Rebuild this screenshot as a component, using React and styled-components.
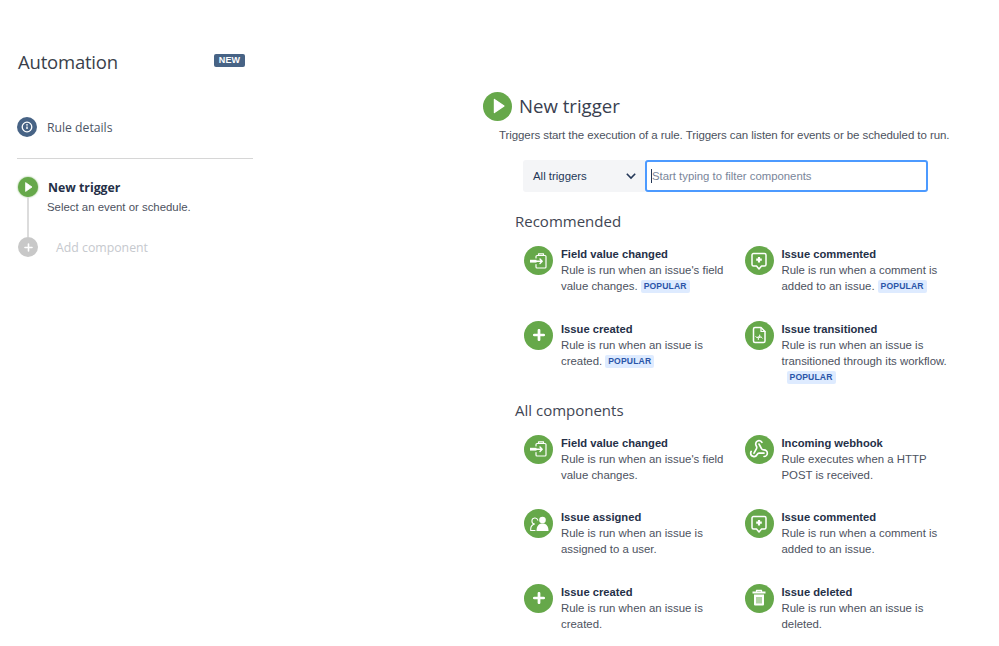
import React from "react";
import styled, { createGlobalStyle } from "styled-components";
import { Webhook } from "lucide-react";

const Global = createGlobalStyle`
  html, body { margin: 0; padding: 0; background: #fff; }
  body { font-family: "Liberation Sans", Arial, sans-serif; color: #4c5260; overflow: hidden; }
`;

const Page = styled.div`
  width: 999px; height: 646px; overflow: hidden; display: flex; align-items: flex-start;
`;
const Sidebar = styled.aside`
  width: 236px; margin-left: 17px; padding-top: 50px; flex: none;
`;
const SideHead = styled.div`
  display: flex; justify-content: space-between; align-items: flex-start; padding: 0 8px 0 1px; height: 66px;
`;
const AppTitle = styled.h1`
  margin: 0; font: 400 18.5px/24px "Open Sans", sans-serif; color: #3a3f4a; letter-spacing: -0.2px;
`;
const NewBadge = styled.span`
  margin-top: 4px; height: 13px; width: 31px; border-radius: 2px; background: #476385; color: #fff;
  font: 700 9px/13px "Liberation Sans", sans-serif; text-align: center; letter-spacing: .2px;
`;
const DetailRow = styled.div`
  display: flex; align-items: center; gap: 10px; height: 22px; padding-bottom: 20px; border-bottom: 1px solid #d6d6d6;
`;
const DetailDot = styled.span`
  width: 20px; height: 20px; border-radius: 50%; background: #476385; display: flex; align-items: center; justify-content: center;
`;
const DetailText = styled.span`
  font: 400 12.2px/16px "Open Sans", sans-serif; color: #4d5566; padding-top: 1px;
`;
const Steps = styled.div`
  display: grid; grid-template-columns: 22px 1fr; column-gap: 9px; padding-top: 18px;
`;
const StepRail = styled.div`
  display: flex; flex-direction: column; align-items: center; grid-row: span 2;
`;
const StepDot = styled.span`
  width: 20px; height: 20px; border-radius: 50%; background: #66a84a; box-shadow: 0 0 2px #66a84a;
  display: flex; align-items: center; justify-content: center; flex: none;
`;
const RailLine = styled.span`
  width: 2px; height: 40px; background: #dcdcdc; flex: none;
`;
const AddDot = styled.span`
  width: 20px; height: 20px; border-radius: 50%; background: #c8c8c8; display: flex; align-items: center; justify-content: center; flex: none;
`;
const StepBody = styled.div`
  padding-top: 3px; margin-left: -1px;
`;
const StepTitle = styled.div`
  font: 700 12.3px/16px "Open Sans", sans-serif; color: #253048; margin-left: 1px;
`;
const StepDesc = styled.div`
  font: 400 11.4px/16px "Liberation Sans", sans-serif; color: #4c5260; margin-top: 3px;
`;
const AddLabel = styled.div`
  margin: 25px 0 0 9px; font: 400 12.3px/16px "Open Sans", sans-serif; color: #c6c9ce;
`;

const Main = styled.main`
  margin-left: 230px; padding-top: 91px; width: 490px; flex: none;
`;
const TriggerHead = styled.div`
  display: flex; align-items: center; gap: 7px; height: 30px;
`;
const BigDot = styled.span`
  width: 29px; height: 29px; border-radius: 50%; background: #66a84a; display: flex; align-items: center; justify-content: center;
`;
const MainTitle = styled.h2`
  margin: 0; font: 400 18.6px/24px "Open Sans", sans-serif; color: #39404f;
`;
const Lead = styled.p`
  margin: 6px 0 0 16px; font: 400 11.5px/16px "Liberation Sans", sans-serif; letter-spacing: -0.08px; color: #4c5260; white-space: nowrap;
`;
const Filters = styled.div`
  display: flex; margin: 17px 0 0 40px; height: 32px;
`;
const SelectBox = styled.div`
  width: 122px; display: flex; align-items: center; justify-content: space-between; padding: 0 8px 0 10px;
  background: #f4f5f7; border-radius: 3px 0 0 3px; font-size: 11.4px; color: #253858; box-sizing: border-box;
`;
const FilterInput = styled.div`
  width: 283px; box-sizing: border-box; border: 2px solid #4c9aff; border-radius: 3px; display: flex; align-items: center;
  padding-left: 4px; font-size: 11.35px; color: #7a869a;
`;
const Caret = styled.span`
  width: 1px; height: 14px; background: #253858;
`;
const SectionTitle = styled.h3`
  margin: ${p => p.$top}px 0 0 32px; font: 400 15px/20px "Open Sans", sans-serif; color: #3f4653;
`;
const Grid = styled.div`
  display: grid; grid-template-columns: 220.5px 220.5px; grid-auto-rows: 74.5px; margin: 15px 0 0 41px;
`;
const Card = styled.div`
  display: flex; gap: 8px; align-items: flex-start;
`;
const Icon = styled.span`
  width: 29px; height: 29px; border-radius: 50%; background: #66a84a; display: flex; align-items: center; justify-content: center; flex: none;
`;
const CardBody = styled.div`
  width: 172px; font: 400 11.4px/16px "Liberation Sans", sans-serif; color: #4c5260;
`;
const CardTitle = styled.div`
  font-weight: 700; color: #253048; height: 16px; font-size: 11.2px;
`;
const Popular = styled.span`
  display: inline-block; margin-left: ${p => p.$block ? 5 : 3}px; padding: 0 3px; height: 13px; background: #deebff; border-radius: 2px;
  color: #2a55a8; font: 700 8.6px/13px "Liberation Sans", sans-serif; letter-spacing: .15px; vertical-align: 1px;
`;

const S = { fill: "none", stroke: "#fff", strokeWidth: 1.5, strokeLinecap: "round", strokeLinejoin: "round" };

const Play = ({ size }) => (
  <svg width={size} height={size} viewBox="0 0 20 20"><path d="M7 4.500 L15 10 L7 15.500 Z" fill="#fff" stroke="#fff" strokeLinejoin="round" /></svg>
);
const Plus = ({ size = 12, w = 3.2 }) => (
  <svg width={size} height={size} viewBox="0 0 14 14"><path d="M7 1.500v11M1.500 7h11" stroke="#fff" strokeWidth={w} strokeLinecap="round" /></svg>
);
const Info = () => (
  <svg width="12" height="12" viewBox="0 0 12 12"><circle cx="6" cy="6" r="4.800" fill="none" stroke="#fff" strokeWidth="1.300" /><path d="M6 5.600v2.400" stroke="#fff" strokeWidth="1.400" /><circle cx="6" cy="3.900" r=".8" fill="#fff" /></svg>
);
const Chevron = () => (
  <svg width="12" height="12" viewBox="0 0 12 12"><path d="M1.800 3.800 6 8l4.200-4.200" fill="none" stroke="#253858" strokeWidth="1.600" /></svg>
);
const FieldIcon = () => (
  <svg width="22" height="22" viewBox="0 0 22 22">
    <path d="M8 8V6.500a1 1 0 0 1 1-1h8a1 1 0 0 1 1 1V17a1 1 0 0 1-1 1H9a1 1 0 0 1-1-1v-2.500" {...S} strokeWidth="1.200" />
    <path d="M10.500 5.500V3.800h5v1.700" {...S} strokeWidth="1.200" />
    <path d="M2 11.200h6.500" stroke="#fff" strokeWidth="2.800" />
    <path d="M8 11.200h6M12 9l2.200 2.200L12 13.400" {...S} strokeWidth="1.400" />
  </svg>
);
const CommentIcon = () => (
  <svg width="20" height="20" viewBox="0 0 20 20">
    <path d="M4.500 2.500h11a1.500 1.500 0 0 1 1.500 1.500v9.500a1.500 1.500 0 0 1-1.500 1.500h-3L10 18l-2.500-3h-3A1.500 1.500 0 0 1 3 13.500V4a1.500 1.500 0 0 1 1.500-1.500z" {...S} />
    <path d="M10 6v5.500M7.200 8.700h5.600" stroke="#fff" strokeWidth="2.200" />
  </svg>
);
const DocIcon = () => (
  <svg width="20" height="20" viewBox="0 0 20 20">
    <path d="M6 2.500h6l4 4V16a1.500 1.500 0 0 1-1.500 1.500h-8.500A1.500 1.500 0 0 1 4.500 16V4A1.500 1.500 0 0 1 6 2.500z" {...S} />
    <path d="M12 2.500V6.500h4" {...S} strokeWidth="1.200" />
    <path d="M6.800 11.500l1.500 1.500 1-1.500v3M13.200 13l-1.500-1.500-1 1.500v-3" {...S} strokeWidth="1" />
  </svg>
);
const UserIcon = () => (
  <svg width="22" height="22" viewBox="0 0 22 22">
    <path d="M9.800 7.200A3 3 0 1 0 6.500 11c-2.500.8-3.800 2.500-3.800 5v1.500h4.300" {...S} strokeWidth="1.100" />
    <circle cx="14.500" cy="7" r="3.300" fill="#fff" />
    <path d="M8.500 18c0-5 2.200-7.500 6-7.500S20.500 13 20.500 18z" fill="#fff" />
  </svg>
);
const TrashIcon = () => (
  <svg width="20" height="20" viewBox="0 0 20 20">
    <path d="M3.500 4.500h13" stroke="#fff" strokeWidth="2" />
    <path d="M7.500 4V2.500h5V4" {...S} strokeWidth="1.300" />
    <path d="M5 6.500h10v10a1 1 0 0 1-1 1H6a1 1 0 0 1-1-1z" fill="#fff" />
    <path d="M8 9v6.500M10 9v6.500M12 9v6.500" stroke="#66a84a" strokeWidth="1" />
  </svg>
);

const Item = ({ icon, title, desc, popular, block }) => (
  <Card>
    <Icon>{icon}</Icon>
    <CardBody>
      <CardTitle>{title}</CardTitle>
      {desc}
      {popular && !block && <Popular>POPULAR</Popular>}
      {popular && block && <><br /><Popular $block>POPULAR</Popular></>}
    </CardBody>
  </Card>
);

const fieldDesc = "Rule is run when an issue's field value changes.";
const commentDesc = "Rule is run when a comment is added to an issue.";
const createdDesc = "Rule is run when an issue is created.";

export default function App() {
  return (
    <Page>
      <Global />
      <Sidebar>
        <SideHead>
          <AppTitle>Automation</AppTitle>
          <NewBadge>NEW</NewBadge>
        </SideHead>
        <DetailRow>
          <DetailDot><Info /></DetailDot>
          <DetailText>Rule details</DetailText>
        </DetailRow>
        <Steps>
          <StepRail>
            <StepDot><Play size={16} /></StepDot>
            <RailLine />
            <AddDot><Plus size={9} w={2.500} /></AddDot>
          </StepRail>
          <StepBody>
            <StepTitle>New trigger</StepTitle>
            <StepDesc>Select an event or schedule.</StepDesc>
            <AddLabel>Add component</AddLabel>
          </StepBody>
        </Steps>
      </Sidebar>
      <Main>
        <TriggerHead>
          <BigDot><Play size={24} /></BigDot>
          <MainTitle>New trigger</MainTitle>
        </TriggerHead>
        <Lead>Triggers start the execution of a rule. Triggers can listen for events or be scheduled to run.</Lead>
        <Filters>
          <SelectBox>All triggers<Chevron /></SelectBox>
          <FilterInput><Caret />Start typing to filter components</FilterInput>
        </Filters>
        <SectionTitle $top={19}>Recommended</SectionTitle>
        <Grid>
          <Item icon={<FieldIcon />} title="Field value changed" desc={fieldDesc} popular />
          <Item icon={<CommentIcon />} title="Issue commented" desc={commentDesc} popular />
          <Item icon={<Plus />} title="Issue created" desc={createdDesc} popular />
          <Item icon={<DocIcon />} title="Issue transitioned" desc="Rule is run when an issue is transitioned through its workflow." popular block />
        </Grid>
        <SectionTitle $top={4.5}>All components</SectionTitle>
        <Grid>
          <Item icon={<FieldIcon />} title="Field value changed" desc={fieldDesc} />
          <Item icon={<Webhook size={20} color="#fff" strokeWidth={2} />} title="Incoming webhook" desc="Rule executes when a HTTP POST is received." />
          <Item icon={<UserIcon />} title="Issue assigned" desc="Rule is run when an issue is assigned to a user." />
          <Item icon={<CommentIcon />} title="Issue commented" desc={commentDesc} />
          <Item icon={<Plus />} title="Issue created" desc={createdDesc} />
          <Item icon={<TrashIcon />} title="Issue deleted" desc="Rule is run when an issue is deleted." />
        </Grid>
      </Main>
    </Page>
  );
}
